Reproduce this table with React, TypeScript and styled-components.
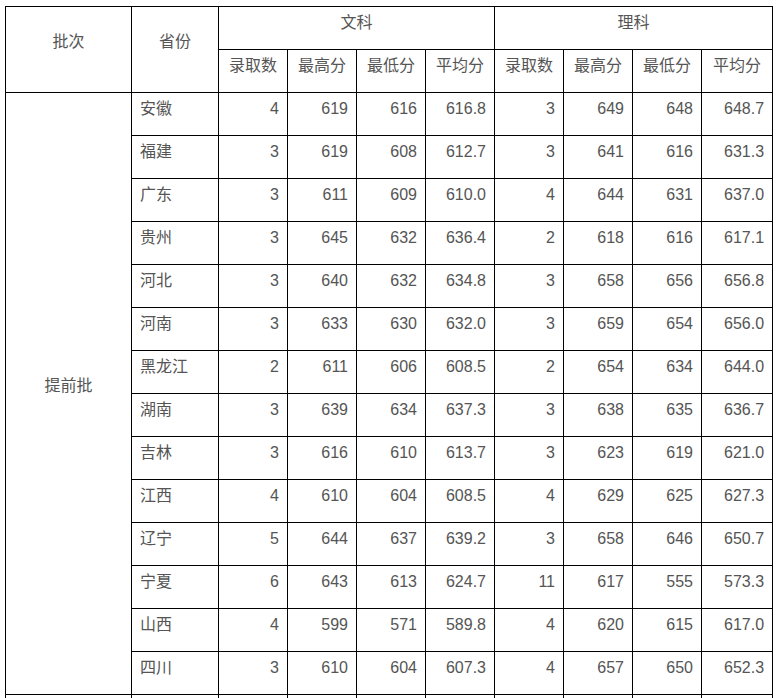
import React from 'react';
import styled, { createGlobalStyle } from 'styled-components';

const GlobalStyle = createGlobalStyle`
  body {
    margin: 0;
    background: #fff;
    font-family: 'Liberation Sans', 'Noto Sans CJK SC', sans-serif;
  }
`;

type Row = {
  province: string;
  wen: [string, string, string, string];
  li: [string, string, string, string];
};

const rows: Row[] = [
  { province: '安徽', wen: ['4', '619', '616', '616.8'], li: ['3', '649', '648', '648.7'] },
  { province: '福建', wen: ['3', '619', '608', '612.7'], li: ['3', '641', '616', '631.3'] },
  { province: '广东', wen: ['3', '611', '609', '610.0'], li: ['4', '644', '631', '637.0'] },
  { province: '贵州', wen: ['3', '645', '632', '636.4'], li: ['2', '618', '616', '617.1'] },
  { province: '河北', wen: ['3', '640', '632', '634.8'], li: ['3', '658', '656', '656.8'] },
  { province: '河南', wen: ['3', '633', '630', '632.0'], li: ['3', '659', '654', '656.0'] },
  { province: '黑龙江', wen: ['2', '611', '606', '608.5'], li: ['2', '654', '634', '644.0'] },
  { province: '湖南', wen: ['3', '639', '634', '637.3'], li: ['3', '638', '635', '636.7'] },
  { province: '吉林', wen: ['3', '616', '610', '613.7'], li: ['3', '623', '619', '621.0'] },
  { province: '江西', wen: ['4', '610', '604', '608.5'], li: ['4', '629', '625', '627.3'] },
  { province: '辽宁', wen: ['5', '644', '637', '639.2'], li: ['3', '658', '646', '650.7'] },
  { province: '宁夏', wen: ['6', '643', '613', '624.7'], li: ['11', '617', '555', '573.3'] },
  { province: '山西', wen: ['4', '599', '571', '589.8'], li: ['4', '620', '615', '617.0'] },
  { province: '四川', wen: ['3', '610', '604', '607.3'], li: ['4', '657', '650', '652.3'] },
];

const colWidths = [126, 87, 69, 69, 69, 69, 69, 69, 69, 71];

const Page = styled.div`
  padding: 6px 0 0 5px;
  height: 692px;
  overflow: hidden;
`;

const Table = styled.table`
  width: 767px;
  table-layout: fixed;
  border-collapse: collapse;
  color: #555;
  font-size: 16px;
`;

const Cell = styled.td<{ $align?: 'left' | 'center' | 'right'; $span?: boolean }>`
  border: 1px solid #000;
  padding: ${(p) => (p.$span ? '1px 8px 17px' : '4px 8px 14px')};
  line-height: 24px;
  vertical-align: middle;
  text-align: ${(p) => p.$align || 'left'};
  white-space: nowrap;
  overflow: hidden;
`;

const HeadCell = styled(Cell).attrs({ as: 'th' })`
  font-weight: normal;
  text-align: center;
`;

// the next batch starts just below the fold; only its borders show
const EmptyCell = styled.td`
  border: 1px solid #000;
  height: 41px;
  padding: 0;
`;

const App = () => (
  <Page>
    <GlobalStyle />
    <Table>
      <colgroup>
        {colWidths.map((w, i) => (
          <col key={i} style={{ width: w }} />
        ))}
      </colgroup>
      <thead>
        <tr>
          <HeadCell $span rowSpan={2}>
            批次
          </HeadCell>
          <HeadCell $span rowSpan={2}>
            省份
          </HeadCell>
          <HeadCell colSpan={4}>文科</HeadCell>
          <HeadCell colSpan={4}>理科</HeadCell>
        </tr>
        <tr>
          {['录取数', '最高分', '最低分', '平均分', '录取数', '最高分', '最低分', '平均分'].map(
            (t, i) => (
              <HeadCell key={i}>{t}</HeadCell>
            )
          )}
        </tr>
      </thead>
      <tbody>
        {rows.map((r, i) => (
          <tr key={r.province}>
            {i === 0 && (
              <Cell $span $align="center" rowSpan={rows.length}>
                提前批
              </Cell>
            )}
            <Cell>{r.province}</Cell>
            {r.wen.map((v, j) => (
              <Cell key={'w' + j} $align="right">
                {v}
              </Cell>
            ))}
            {r.li.map((v, j) => (
              <Cell key={'l' + j} $align="right">
                {v}
              </Cell>
            ))}
          </tr>
        ))}
        <tr>
          {colWidths.map((_, i) => (
            <EmptyCell key={i} />
          ))}
        </tr>
      </tbody>
    </Table>
  </Page>
);

export default App;
